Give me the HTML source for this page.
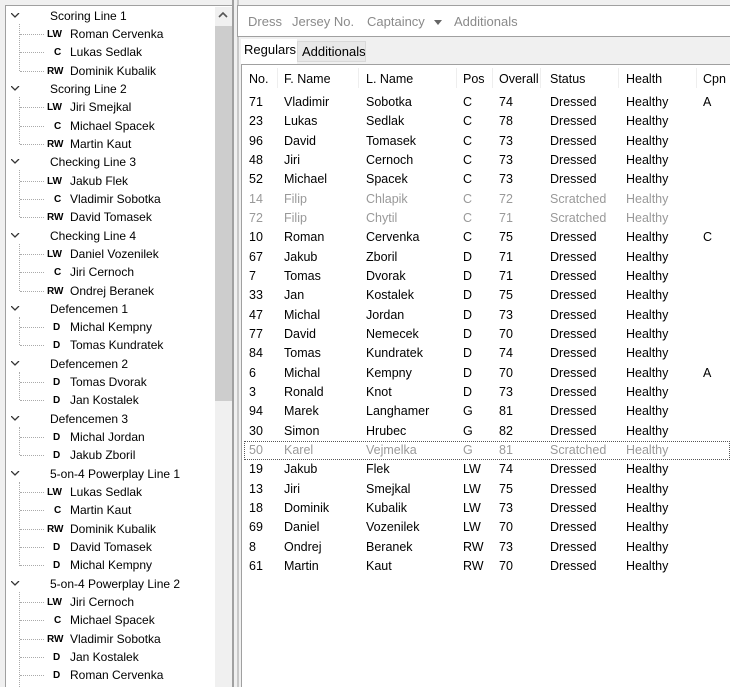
<!DOCTYPE html>
<html><head><meta charset="utf-8"><style>
*{margin:0;padding:0;box-sizing:border-box}
body{width:730px;height:687px;overflow:hidden;background:#f0f0f0;font-family:"Liberation Sans",sans-serif;font-size:12px;color:#000;position:relative}
.tree{position:absolute;left:5px;top:5px;width:227px;height:682px;background:#fff;border-left:1px solid #a0a0a0;border-top:1px solid #a0a0a0}
.sb{position:absolute;left:215px;top:7px;width:17px;height:680px;background:#f0f0f0}
.thumb{position:absolute;left:215px;top:26px;width:17px;height:375px;background:#cdcdcd}
.r{position:absolute;white-space:nowrap;line-height:14px}
.g{left:50px}
.n{left:70px}
.p{font-size:10px;font-weight:bold;left:47px;width:22px}
.chev{position:absolute;left:11px;width:9px;height:6px}
.vl{position:absolute;left:19px;width:0;border-left:1px dotted #aaa}
.hl{position:absolute;left:20px;width:24px;border-top:1px dotted #aaa}
.div1{position:absolute;left:232px;top:0;width:9px;height:687px;background:#f0f0f0;border-left:2px solid #a0a0a0}
.div1:after{content:"";position:absolute;left:3px;top:0;width:2px;height:687px;background:#c8c8c8}
.tb{position:absolute;left:237px;top:5px;width:493px;height:32px;background:#fff;border-top:1px solid #a0a0a0;border-bottom:1px solid #a0a0a0;border-left:1px solid #a0a0a0}
.tb span{position:absolute;top:8px;color:#8a8a8a;font-size:13px}
.tab1{position:absolute;left:241px;top:39px;width:56px;height:25px;background:#fff;padding:3px 0 0 3px;font-size:13px}
.tab2{position:absolute;left:297px;top:41px;width:69px;height:21px;background:#e8e8e8;border:1px solid #d9d9d9;padding:2px 0 0 4px;font-size:13px}
.tbl{position:absolute;left:241px;top:64px;width:489px;height:623px;background:#fff;border-left:1px solid #a0a0a0;border-top:1px solid #a0a0a0}
.row{position:absolute;left:0;height:19px;width:489px;font-size:12.5px}
.row span{position:absolute;top:2px;white-space:nowrap}
.gr{color:#999}
.sel{outline:1px dotted #555;outline-offset:-1px}
.c1{left:7px}.c2{left:42px}.c3{left:124px}.c4{left:221px}.c5{left:257px}.c6{left:308px}.c7{left:384px}.c8{left:461px}
.hs{position:absolute;top:3px;width:1px;height:20px;background:#eee}
</style></head><body>
<div class="tree"></div>
<div class="sb"></div><div class="thumb"></div>
<svg style="position:absolute;left:218px;top:11px" width="10" height="8"><path d="M1 6 L5 2 L9 6" fill="none" stroke="#555" stroke-width="1.6"/></svg>

<div style="position:absolute;left:0;top:0">
<svg class="chev" style="top:13px"><path d="M0 0 L4 4 L8 0" fill="none" stroke="#333" stroke-width="1.3"/></svg>
<div class="r g" style="top:9px">Scoring Line 1</div>
<div class="vl" style="top:24px;height:47px"></div>
<div class="hl" style="top:34px"></div><div class="r p" style="top:28px">LW</div><div class="r n" style="top:27px">Roman Cervenka</div>
<div class="hl" style="top:52px"></div><div class="r p" style="top:46px;left:54px">C</div><div class="r n" style="top:45px">Lukas Sedlak</div>
<div class="hl" style="top:71px"></div><div class="r p" style="top:65px">RW</div><div class="r n" style="top:64px">Dominik Kubalik</div>

<svg class="chev" style="top:86px"><path d="M0 0 L4 4 L8 0" fill="none" stroke="#333" stroke-width="1.3"/></svg>
<div class="r g" style="top:82px">Scoring Line 2</div>
<div class="vl" style="top:97px;height:47px"></div>
<div class="hl" style="top:107px"></div><div class="r p" style="top:101px">LW</div><div class="r n" style="top:100px">Jiri Smejkal</div>
<div class="hl" style="top:126px"></div><div class="r p" style="top:120px;left:54px">C</div><div class="r n" style="top:119px">Michael Spacek</div>
<div class="hl" style="top:144px"></div><div class="r p" style="top:138px">RW</div><div class="r n" style="top:137px">Martin Kaut</div>

<svg class="chev" style="top:159px"><path d="M0 0 L4 4 L8 0" fill="none" stroke="#333" stroke-width="1.3"/></svg>
<div class="r g" style="top:155px">Checking Line 3</div>
<div class="vl" style="top:170px;height:47px"></div>
<div class="hl" style="top:181px"></div><div class="r p" style="top:175px">LW</div><div class="r n" style="top:174px">Jakub Flek</div>
<div class="hl" style="top:199px"></div><div class="r p" style="top:193px;left:54px">C</div><div class="r n" style="top:192px">Vladimir Sobotka</div>
<div class="hl" style="top:217px"></div><div class="r p" style="top:211px">RW</div><div class="r n" style="top:210px">David Tomasek</div>

<svg class="chev" style="top:233px"><path d="M0 0 L4 4 L8 0" fill="none" stroke="#333" stroke-width="1.3"/></svg>
<div class="r g" style="top:229px">Checking Line 4</div>
<div class="vl" style="top:244px;height:47px"></div>
<div class="hl" style="top:254px"></div><div class="r p" style="top:248px">LW</div><div class="r n" style="top:247px">Daniel Vozenilek</div>
<div class="hl" style="top:272px"></div><div class="r p" style="top:266px;left:54px">C</div><div class="r n" style="top:265px">Jiri Cernoch</div>
<div class="hl" style="top:291px"></div><div class="r p" style="top:285px">RW</div><div class="r n" style="top:284px">Ondrej Beranek</div>

<svg class="chev" style="top:306px"><path d="M0 0 L4 4 L8 0" fill="none" stroke="#333" stroke-width="1.3"/></svg>
<div class="r g" style="top:302px">Defencemen 1</div>
<div class="vl" style="top:317px;height:28px"></div>
<div class="hl" style="top:327px"></div><div class="r p" style="top:321px;left:53px">D</div><div class="r n" style="top:320px">Michal Kempny</div>
<div class="hl" style="top:345px"></div><div class="r p" style="top:339px;left:53px">D</div><div class="r n" style="top:338px">Tomas Kundratek</div>

<svg class="chev" style="top:361px"><path d="M0 0 L4 4 L8 0" fill="none" stroke="#333" stroke-width="1.3"/></svg>
<div class="r g" style="top:357px">Defencemen 2</div>
<div class="vl" style="top:372px;height:28px"></div>
<div class="hl" style="top:382px"></div><div class="r p" style="top:376px;left:53px">D</div><div class="r n" style="top:375px">Tomas Dvorak</div>
<div class="hl" style="top:400px"></div><div class="r p" style="top:394px;left:53px">D</div><div class="r n" style="top:393px">Jan Kostalek</div>

<svg class="chev" style="top:416px"><path d="M0 0 L4 4 L8 0" fill="none" stroke="#333" stroke-width="1.3"/></svg>
<div class="r g" style="top:412px">Defencemen 3</div>
<div class="vl" style="top:427px;height:28px"></div>
<div class="hl" style="top:437px"></div><div class="r p" style="top:431px;left:53px">D</div><div class="r n" style="top:430px">Michal Jordan</div>
<div class="hl" style="top:455px"></div><div class="r p" style="top:449px;left:53px">D</div><div class="r n" style="top:448px">Jakub Zboril</div>

<svg class="chev" style="top:471px"><path d="M0 0 L4 4 L8 0" fill="none" stroke="#333" stroke-width="1.3"/></svg>
<div class="r g" style="top:467px">5-on-4 Powerplay Line 1</div>
<div class="vl" style="top:482px;height:84px"></div>
<div class="hl" style="top:492px"></div><div class="r p" style="top:486px">LW</div><div class="r n" style="top:485px">Lukas Sedlak</div>
<div class="hl" style="top:510px"></div><div class="r p" style="top:504px;left:54px">C</div><div class="r n" style="top:503px">Martin Kaut</div>
<div class="hl" style="top:529px"></div><div class="r p" style="top:523px">RW</div><div class="r n" style="top:522px">Dominik Kubalik</div>
<div class="hl" style="top:547px"></div><div class="r p" style="top:541px;left:53px">D</div><div class="r n" style="top:540px">David Tomasek</div>
<div class="hl" style="top:565px"></div><div class="r p" style="top:559px;left:53px">D</div><div class="r n" style="top:558px">Michal Kempny</div>

<svg class="chev" style="top:581px"><path d="M0 0 L4 4 L8 0" fill="none" stroke="#333" stroke-width="1.3"/></svg>
<div class="r g" style="top:577px">5-on-4 Powerplay Line 2</div>
<div class="vl" style="top:592px;height:95px"></div>
<div class="hl" style="top:602px"></div><div class="r p" style="top:596px">LW</div><div class="r n" style="top:595px">Jiri Cernoch</div>
<div class="hl" style="top:620px"></div><div class="r p" style="top:614px;left:54px">C</div><div class="r n" style="top:613px">Michael Spacek</div>
<div class="hl" style="top:639px"></div><div class="r p" style="top:633px">RW</div><div class="r n" style="top:632px">Vladimir Sobotka</div>
<div class="hl" style="top:657px"></div><div class="r p" style="top:651px;left:53px">D</div><div class="r n" style="top:650px">Jan Kostalek</div>
<div class="hl" style="top:675px"></div><div class="r p" style="top:669px;left:53px">D</div><div class="r n" style="top:668px">Roman Cervenka</div>
</div>

<div class="div1"></div>
<div class="tb">
<span style="left:10px">Dress</span><span style="left:54px">Jersey No.</span><span style="left:129px">Captaincy</span>
<svg style="position:absolute;left:196px;top:14px" width="9" height="6"><path d="M0 0 L8 0 L4 5Z" fill="#666"/></svg>
<span style="left:216px">Additionals</span>
</div>
<div class="tab1">Regulars</div>
<div class="tab2">Additionals</div>

<div class="tbl">
<div class="row hd" style="top:5px"><span class="c1">No.</span><span class="c2">F. Name</span><span class="c3">L. Name</span><span class="c4">Pos</span><span class="c5">Overall</span><span class="c6">Status</span><span class="c7">Health</span><span class="c8">Cpn</span></div>
<div class="hs" style="left:35px"></div><div class="hs" style="left:116px"></div><div class="hs" style="left:214px"></div><div class="hs" style="left:250px"></div><div class="hs" style="left:298px"></div><div class="hs" style="left:376px"></div><div class="hs" style="left:454px"></div>

<div class="row" style="top:28px"><span class="c1">71</span><span class="c2">Vladimir</span><span class="c3">Sobotka</span><span class="c4">C</span><span class="c5">74</span><span class="c6">Dressed</span><span class="c7">Healthy</span><span class="c8">A</span></div>
<div class="row" style="top:47px"><span class="c1">23</span><span class="c2">Lukas</span><span class="c3">Sedlak</span><span class="c4">C</span><span class="c5">78</span><span class="c6">Dressed</span><span class="c7">Healthy</span></div>
<div class="row" style="top:67px"><span class="c1">96</span><span class="c2">David</span><span class="c3">Tomasek</span><span class="c4">C</span><span class="c5">73</span><span class="c6">Dressed</span><span class="c7">Healthy</span></div>
<div class="row" style="top:86px"><span class="c1">48</span><span class="c2">Jiri</span><span class="c3">Cernoch</span><span class="c4">C</span><span class="c5">73</span><span class="c6">Dressed</span><span class="c7">Healthy</span></div>
<div class="row" style="top:105px"><span class="c1">52</span><span class="c2">Michael</span><span class="c3">Spacek</span><span class="c4">C</span><span class="c5">73</span><span class="c6">Dressed</span><span class="c7">Healthy</span></div>
<div class="row gr" style="top:125px"><span class="c1">14</span><span class="c2">Filip</span><span class="c3">Chlapik</span><span class="c4">C</span><span class="c5">72</span><span class="c6">Scratched</span><span class="c7">Healthy</span></div>
<div class="row gr" style="top:144px"><span class="c1">72</span><span class="c2">Filip</span><span class="c3">Chytil</span><span class="c4">C</span><span class="c5">71</span><span class="c6">Scratched</span><span class="c7">Healthy</span></div>
<div class="row" style="top:163px"><span class="c1">10</span><span class="c2">Roman</span><span class="c3">Cervenka</span><span class="c4">C</span><span class="c5">75</span><span class="c6">Dressed</span><span class="c7">Healthy</span><span class="c8">C</span></div>
<div class="row" style="top:183px"><span class="c1">67</span><span class="c2">Jakub</span><span class="c3">Zboril</span><span class="c4">D</span><span class="c5">71</span><span class="c6">Dressed</span><span class="c7">Healthy</span></div>
<div class="row" style="top:202px"><span class="c1">7</span><span class="c2">Tomas</span><span class="c3">Dvorak</span><span class="c4">D</span><span class="c5">71</span><span class="c6">Dressed</span><span class="c7">Healthy</span></div>
<div class="row" style="top:221px"><span class="c1">33</span><span class="c2">Jan</span><span class="c3">Kostalek</span><span class="c4">D</span><span class="c5">75</span><span class="c6">Dressed</span><span class="c7">Healthy</span></div>
<div class="row" style="top:241px"><span class="c1">47</span><span class="c2">Michal</span><span class="c3">Jordan</span><span class="c4">D</span><span class="c5">73</span><span class="c6">Dressed</span><span class="c7">Healthy</span></div>
<div class="row" style="top:260px"><span class="c1">77</span><span class="c2">David</span><span class="c3">Nemecek</span><span class="c4">D</span><span class="c5">70</span><span class="c6">Dressed</span><span class="c7">Healthy</span></div>
<div class="row" style="top:279px"><span class="c1">84</span><span class="c2">Tomas</span><span class="c3">Kundratek</span><span class="c4">D</span><span class="c5">74</span><span class="c6">Dressed</span><span class="c7">Healthy</span></div>
<div class="row" style="top:299px"><span class="c1">6</span><span class="c2">Michal</span><span class="c3">Kempny</span><span class="c4">D</span><span class="c5">70</span><span class="c6">Dressed</span><span class="c7">Healthy</span><span class="c8">A</span></div>
<div class="row" style="top:318px"><span class="c1">3</span><span class="c2">Ronald</span><span class="c3">Knot</span><span class="c4">D</span><span class="c5">73</span><span class="c6">Dressed</span><span class="c7">Healthy</span></div>
<div class="row" style="top:337px"><span class="c1">94</span><span class="c2">Marek</span><span class="c3">Langhamer</span><span class="c4">G</span><span class="c5">81</span><span class="c6">Dressed</span><span class="c7">Healthy</span></div>
<div class="row" style="top:357px"><span class="c1">30</span><span class="c2">Simon</span><span class="c3">Hrubec</span><span class="c4">G</span><span class="c5">82</span><span class="c6">Dressed</span><span class="c7">Healthy</span></div>
<div class="row gr sel" style="top:376px;left:2px;width:486px"><span class="c1" style="left:5px">50</span><span style="left:40px">Karel</span><span style="left:122px">Vejmelka</span><span style="left:219px">G</span><span style="left:255px">81</span><span style="left:306px">Scratched</span><span style="left:382px">Healthy</span></div>
<div class="row" style="top:395px"><span class="c1">19</span><span class="c2">Jakub</span><span class="c3">Flek</span><span class="c4">LW</span><span class="c5">74</span><span class="c6">Dressed</span><span class="c7">Healthy</span></div>
<div class="row" style="top:415px"><span class="c1">13</span><span class="c2">Jiri</span><span class="c3">Smejkal</span><span class="c4">LW</span><span class="c5">75</span><span class="c6">Dressed</span><span class="c7">Healthy</span></div>
<div class="row" style="top:434px"><span class="c1">18</span><span class="c2">Dominik</span><span class="c3">Kubalik</span><span class="c4">LW</span><span class="c5">73</span><span class="c6">Dressed</span><span class="c7">Healthy</span></div>
<div class="row" style="top:453px"><span class="c1">69</span><span class="c2">Daniel</span><span class="c3">Vozenilek</span><span class="c4">LW</span><span class="c5">70</span><span class="c6">Dressed</span><span class="c7">Healthy</span></div>
<div class="row" style="top:473px"><span class="c1">8</span><span class="c2">Ondrej</span><span class="c3">Beranek</span><span class="c4">RW</span><span class="c5">73</span><span class="c6">Dressed</span><span class="c7">Healthy</span></div>
<div class="row" style="top:492px"><span class="c1">61</span><span class="c2">Martin</span><span class="c3">Kaut</span><span class="c4">RW</span><span class="c5">70</span><span class="c6">Dressed</span><span class="c7">Healthy</span></div>
</div>
</body></html>
